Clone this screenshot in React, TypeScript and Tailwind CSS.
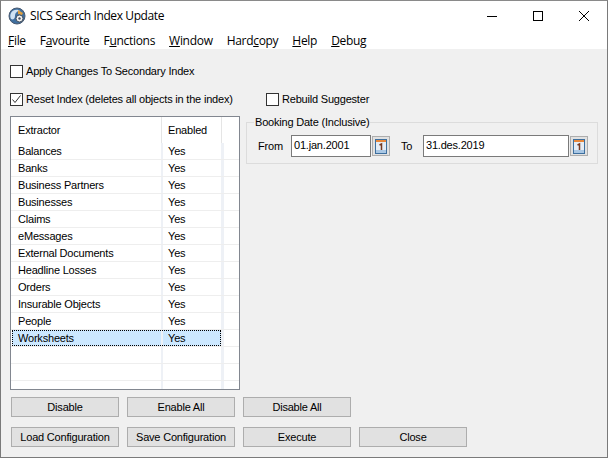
const extractors = [
  'Balances',
  'Banks',
  'Business Partners',
  'Businesses',
  'Claims',
  'eMessages',
  'External Documents',
  'Headline Losses',
  'Orders',
  'Insurable Objects',
  'People',
  'Worksheets',
];

const menus = [
  { pre: '', key: 'F', post: 'ile' },
  { pre: 'F', key: 'a', post: 'vourite' },
  { pre: 'F', key: 'u', post: 'nctions' },
  { pre: '', key: 'W', post: 'indow' },
  { pre: 'Hard', key: 'c', post: 'opy' },
  { pre: '', key: 'H', post: 'elp' },
  { pre: '', key: 'D', post: 'ebug' },
];

function AppIcon() {
  return (
    <svg width="18" height="18" viewBox="0 0 18 18">
      <circle cx="9" cy="9" r="8" fill="#3f6f9f" stroke="#4a5a70" />
      <path d="M3 6c2-4 7-4 9-2-3 0-5 2-5 5s-2 4-4 3c-1-2-1-4 0-6z" fill="#cfe2f3" />
      <path d="M10 3l5 3-1 2-4-1z" fill="#e0a040" />
      <circle cx="11.500" cy="11.500" r="3.500" fill="#f4f4f4" stroke="#44505f" />
      <circle cx="11.500" cy="11.500" r="1.200" fill="#44505f" />
    </svg>
  );
}

function CalendarButton() {
  return (
    <div className="w-[18px] h-[20px] bg-[#e1e1e1] border border-[#adadad] flex items-center justify-center">
      <svg width="12" height="15" viewBox="0 0 12 15">
        <rect x="0.500" y="0.500" width="11" height="14" fill="#e6edf5" stroke="#3d6f9e" />
        <rect x="1" y="1" width="10" height="2" fill="#e8873a" />
        <rect x="1" y="11" width="10" height="3" fill="#a9c7e4" />
        <path d="M4.500 6l2-1v6" fill="none" stroke="#7a3b22" strokeWidth="1.500" />
      </svg>
    </div>
  );
}

function WindowControls() {
  return (
    <div className="ml-auto flex items-center">
      <div className="w-[46px] flex justify-center">
        <svg width="10" height="10" viewBox="0 0 10 10">
          <path d="M0 5.500h10" stroke="#000000" strokeWidth="1" />
        </svg>
      </div>
      <div className="w-[46px] flex justify-center">
        <svg width="10" height="10" viewBox="0 0 10 10">
          <rect x="0.500" y="0.500" width="9" height="9" fill="none" stroke="#000000" strokeWidth="1" />
        </svg>
      </div>
      <div className="w-[46px] flex justify-center">
        <svg width="10" height="10" viewBox="0 0 10 10">
          <path d="M0 0l10 10M10 0l-10 10" stroke="#000000" strokeWidth="1" />
        </svg>
      </div>
    </div>
  );
}

function CheckBox({ checked, label }: { checked?: boolean; label: string }) {
  return (
    <div className="flex items-center">
      <div className="w-[13px] h-[13px] bg-white border border-[#333333] flex items-center justify-center">
        {checked && (
          <svg width="11" height="11" viewBox="0 0 11 11">
            <path d="M1.500 5.500l2.500 3 5.500-7" fill="none" stroke="#333333" strokeWidth="1" />
          </svg>
        )}
      </div>
      <span className="ml-[3px]">{label}</span>
    </div>
  );
}

function Btn({ label }: { label: string }) {
  return (
    <button className="w-[108px] h-[20px] bg-[#e1e1e1] border border-[#adadad] flex items-center justify-center text-black tracking-[-0.2px]">
      {label}
    </button>
  );
}

export default function App() {
  return (
    <div className="w-[608px] h-[458px] flex flex-col bg-[#f0f0f0] border border-[#7a7a7a] border-t-[#8a8a8a] overflow-hidden text-[11px] leading-[13px] tracking-[-0.2px] text-black font-['Liberation_Sans',sans-serif]">
      <div className="h-[29px] shrink-0 bg-white flex items-center pl-[7px]">
        <AppIcon />
        <span className="ml-[4px] text-[12px] tracking-[-0.4px] font-['Open_Sans',sans-serif]">SICS Search Index Update</span>
        <WindowControls />
      </div>
      <div className="h-[19px] shrink-0 bg-white flex items-center pl-[7px] pt-[2px] gap-[14px] text-[12px] tracking-[-0.3px] font-['Open_Sans',sans-serif]">
        {menus.map((m) => (
          <span key={m.pre + m.key}>
            {m.pre}
            <span className="underline">{m.key}</span>
            {m.post}
          </span>
        ))}
      </div>
      <div className="flex-1 flex flex-col pl-[9px] pt-[16px]">
        <CheckBox label="Apply Changes To Secondary Index" />
        <div className="flex items-center mt-[15px]">
          <div className="w-[256px]">
            <CheckBox checked label="Reset Index (deletes all objects in the index)" />
          </div>
          <CheckBox label="Rebuild Suggester" />
        </div>
        <div className="flex mt-[10px]">
          <div className="w-[230px] h-[274px] bg-white border border-[#828790] flex flex-col overflow-hidden">
            <div className="h-[26px] shrink-0 flex items-center">
              <div className="w-[150px] pl-[7px]">Extractor</div>
              <div className="w-[60px] pl-[6px] border-l border-[#e5e5e5] h-full flex items-center">Enabled</div>
              <div className="border-l border-[#e5e5e5] h-full" />
            </div>
            {[...extractors, '', '', ''].map((name, i) => (
              <div key={i} className="h-[17px] shrink-0 flex px-[1px] border-b border-[#eeeeee]">
                <div className={`w-[209px] flex ${name === 'Worksheets' ? 'bg-[#cce8ff] outline-1 outline-dotted outline-black -outline-offset-1' : ''}`}>
                  <div className="w-[149px] pl-[6px] pt-[1px] flex items-center">{name}</div>
                  <div className="w-[60px] pl-[5px] pt-[1px] border-l-2 border-[#eef1f6] flex items-center">{name && 'Yes'}</div>
                </div>
                <div className="w-[3px] bg-[#eef1f6]" />
              </div>
            ))}
          </div>
          <div className="ml-[6px] mt-[6px] relative w-[352px] h-[42px] border border-[#dcdcdc] flex items-center pl-[11px] pt-[6px]">
            <span className="absolute -top-[7px] left-[7px] bg-[#f0f0f0] px-[1px]">Booking Date (Inclusive)</span>
            <span className="w-[33px]">From</span>
            <div className="w-[80px] h-[22px] bg-white border border-[#7a7a7a] flex items-center pl-[2px] pb-[1px]">01.jan.2001</div>
            <div className="ml-[1px]"><CalendarButton /></div>
            <span className="ml-[11px] w-[22px]">To</span>
            <div className="w-[146px] h-[22px] bg-white border border-[#7a7a7a] flex items-center pl-[2px] pb-[1px]">31.des.2019</div>
            <div className="ml-[1px]"><CalendarButton /></div>
          </div>
        </div>
        <div className="flex gap-[8px] mt-[7px] ml-[1px]">
          <Btn label="Disable" />
          <Btn label="Enable All" />
          <Btn label="Disable All" />
        </div>
        <div className="flex gap-[8px] mt-[10px] ml-[1px]">
          <Btn label="Load Configuration" />
          <Btn label="Save Configuration" />
          <Btn label="Execute" />
          <Btn label="Close" />
        </div>
      </div>
    </div>
  );
}
